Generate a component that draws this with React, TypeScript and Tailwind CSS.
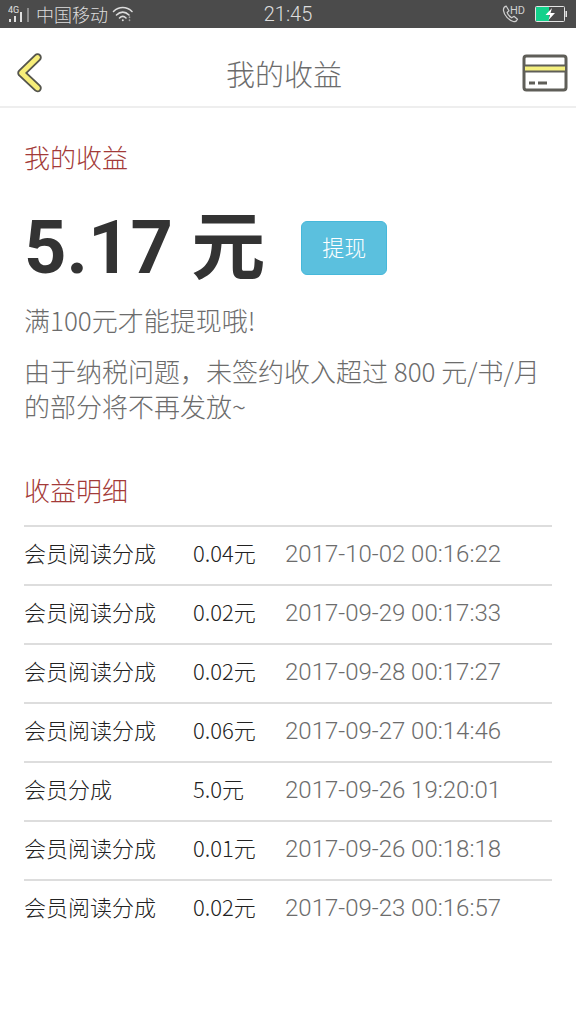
import React from "react";

interface Income {
  type: string;
  amount: string;
  time: string;
}

const incomes: Income[] = [
  { type: "会员阅读分成", amount: "0.04元", time: "2017-10-02 00:16:22" },
  { type: "会员阅读分成", amount: "0.02元", time: "2017-09-29 00:17:33" },
  { type: "会员阅读分成", amount: "0.02元", time: "2017-09-28 00:17:27" },
  { type: "会员阅读分成", amount: "0.06元", time: "2017-09-27 00:14:46" },
  { type: "会员分成", amount: "5.0元", time: "2017-09-26 19:20:01" },
  { type: "会员阅读分成", amount: "0.01元", time: "2017-09-26 00:18:18" },
  { type: "会员阅读分成", amount: "0.02元", time: "2017-09-23 00:16:57" }
];

const SignalIcon = () => (
  <svg width="24" height="18" viewBox="0 0 24 18" fill="#e0e0e0" aria-hidden="true">
    <text x="0" y="8" fontSize="9" fontWeight="400" fontFamily="Roboto, sans-serif">4G</text>
    <rect x="1" y="14" width="2" height="3" />
    <rect x="6" y="11" width="2" height="6" />
    <rect x="12" y="7" width="2" height="10" />
    <rect x="19" y="3" width="2" height="14" fill="#8c8c8c" />
  </svg>
);

const WifiIcon = () => (
  <svg width="22" height="18" viewBox="0 0 22 18" fill="none" stroke="#dcdcdc" strokeWidth="1.6" strokeLinecap="round" aria-hidden="true">
    <path d="M1.500 6.500C7 1.200 14.500 1.200 20 6.500" />
    <path d="M4.500 10C8.300 6.200 13.200 6.200 17 10" />
    <path d="M7.500 13C9.500 11 12 11 14 13" />
    <circle cx="10.800" cy="15.200" r="1" fill="#dcdcdc" stroke="none" />
    <path d="M17.500 12v.4M17.500 15v.4" stroke="#a0a0a0" />
  </svg>
);

const CallIcon = () => (
  <svg width="25" height="20" viewBox="0 0 25 20" fill="none" aria-hidden="true">
    <path
      d="M4.300 2.200C2.600 2.700 1.200 4.400 1.500 6.600C2.200 11.500 6.800 16.200 11.300 17.500C13.200 18 14.900 16.700 15.500 15.300L12 12.300L9.700 13.800C7.800 12.800 5.900 10.600 5.100 8.500L7 6.700Z"
      stroke="#d0d0d0"
      strokeWidth="1.2"
      strokeLinejoin="round"
    />
    <text x="8" y="10" fontSize="11" fontWeight="400" fontFamily="Roboto, sans-serif" fill="#d0d0d0">HD</text>
  </svg>
);

const BatteryIcon = () => (
  <svg width="33" height="16" viewBox="0 0 33 16" aria-hidden="true">
    <rect x="0.500" y="0.500" width="29" height="15" rx="1" fill="none" stroke="#e4e4e4" />
    <rect x="1" y="1" width="13" height="14" fill="#14d18b" />
    <path d="M17 2L10.500 9H15L13.500 14L20 7H15.500Z" fill="#fff" />
    <rect x="30.500" y="5" width="1.500" height="6" fill="#e4e4e4" />
  </svg>
);

const BackIcon = () => (
  <svg width="28" height="42" viewBox="0 0 28 42" fill="none" strokeLinecap="round" strokeLinejoin="round" aria-hidden="true">
    <path d="M21.500 5.500L5.500 21L21.500 36" stroke="#55554d" strokeWidth="8.500" />
    <path d="M21.500 5.500L5.500 21L21.500 36" stroke="#f7ee79" strokeWidth="4.800" />
  </svg>
);

const CardIcon = () => (
  <svg width="46" height="38" viewBox="0 0 46 38" fill="none" stroke="#5f5e58" strokeWidth="3" aria-hidden="true">
    <rect x="2" y="2" width="42" height="34" rx="2.500" />
    <rect x="2" y="11.500" width="42" height="6" fill="#f5f07e" strokeWidth="2" />
    <path d="M7 29h6M16 29h9" />
  </svg>
);

const App: React.FC = () => {
  return (
    <div className="min-h-screen bg-white font-['Noto_Sans_CJK_SC',sans-serif] font-light text-[#6c6c6c]">
      {/* Status bar */}
      <div className="grid h-7 grid-cols-3 items-center bg-[#4b4b4b] px-2 text-[#dddddd]">
        <div className="flex items-center gap-1">
          <SignalIcon />
          <span className="text-lg leading-7">中国移动</span>
          <WifiIcon />
        </div>
        <span className="text-center font-[Roboto,sans-serif] text-xl leading-7">21:45</span>
        <div className="flex items-center justify-end gap-2">
          <CallIcon />
          <BatteryIcon />
        </div>
      </div>

      {/* Header */}
      <header className="flex h-20 items-center justify-between border-b-2 border-[#eeeeee] pt-3 pr-2 pl-4">
        <button type="button" aria-label="返回" className="flex w-8">
          <BackIcon />
        </button>
        <h1 className="text-[29px] leading-10">我的收益</h1>
        <button type="button" aria-label="银行卡" className="flex w-12 justify-end">
          <CardIcon />
        </button>
      </header>

      <main className="px-6 pt-8">
        <h2 className="text-[26px] leading-[34px] text-[#a33a38]">我的收益</h2>

        <div className="mt-5 flex items-center gap-9">
          <p className="font-[Roboto,'Noto_Sans_CJK_SC',sans-serif] text-[74px] leading-[108px] font-bold text-[#333333]">5.17 元</p>
          <button type="button" className="h-[54px] rounded-md border border-[#46b8da] bg-[#5bc0de] px-5 pb-1 text-[22px] text-white">
            提现
          </button>
        </div>

        <p className="mt-px text-[26px] leading-[34px]">满100元才能提现哦!</p>
        <p className="mt-4 text-[26px] leading-[35px]">由于纳税问题，未签约收入超过 800 元/书/月的部分将不再发放~</p>

        <h2 className="mt-[50px] text-[26px] leading-[34px] text-[#a33a38]">收益明细</h2>

        {/* Income list */}
        <table className="mt-[18px] w-full text-left text-[22px] leading-7">
          <tbody>
            {incomes.map((item) => (
              <tr key={item.time} className="h-[59px] border-t-2 border-[#dddddd]">
                <td className="w-[169px] pb-2 text-[#222222]">{item.type}</td>
                <td className="w-[92px] pb-2 text-[#222222]">{item.amount}</td>
                <td className="pb-1 font-[Roboto,sans-serif] text-2xl leading-7">{item.time}</td>
              </tr>
            ))}
          </tbody>
        </table>
      </main>
    </div>
  );
};

export default App;
